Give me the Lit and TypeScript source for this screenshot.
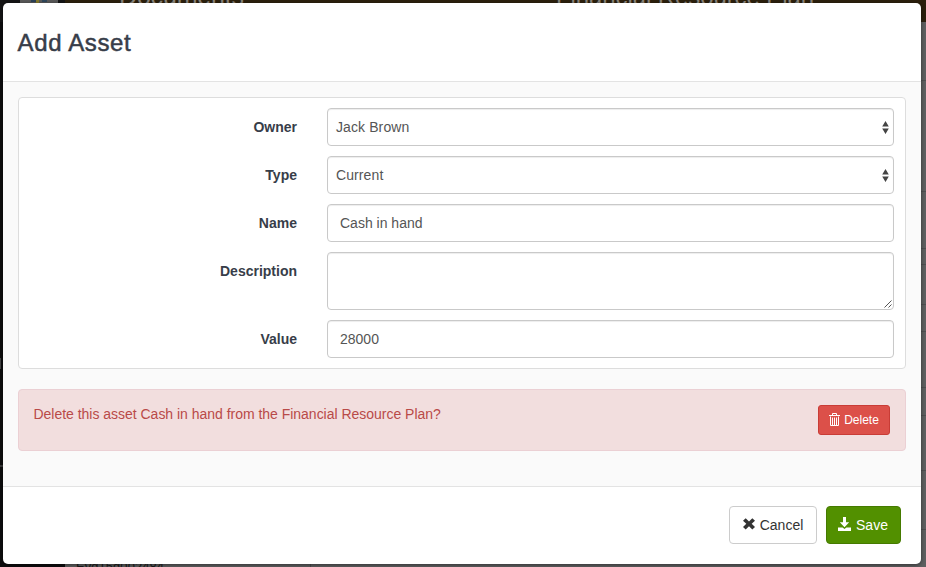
import { LitElement, html, css, svg } from "lit";
import { customElement, property } from "lit/decorators.js";

const LINES = [80, 191, 248, 264, 304, 331, 387, 415, 470, 529];

@customElement("page-backdrop")
class PageBackdrop extends LitElement {
  static styles = css`
    :host { display: block; }
    svg { display: block; }
    text { font-family: "Liberation Sans", Arial, sans-serif; }
  `;
  render() {
    return html`<svg width="926" height="567" viewBox="0 0 926 567">
      <rect width="926" height="567" fill="#5f6061" />
      <rect width="926" height="22" fill="#2c200d" />
      <rect width="65" height="567" fill="#151516" />
      <rect y="22" width="65" height="545" fill="#0d0d0e" />
      <rect x="20" width="38" height="6" fill="#5a5a5a" />
      <rect x="31" width="5" height="2" fill="#2c4258" />
      <rect x="36" width="3" height="3" fill="#857a2c" />
      <rect x="42" width="5" height="2" fill="#30485c" />
      <rect y="465" width="3" height="2" fill="#3a3a3a" />
      <rect y="358" width="1" height="11" fill="#444" />
      <text x="119" y="4.6" font-size="25" textLength="125" fill="#8d877e">Documents</text>
      <text x="556" y="4.6" font-size="24" textLength="258" fill="#8d877e">Financial Resource Plan</text>
      ${LINES.map((y) => svg`<rect x="900" y=${y} width="26" height="1" fill="#4f5051" />`)}
      <rect x="310" y="560" width="1" height="7" fill="#4b4c4d" />
      <text x="76" y="571" font-size="13" textLength="88" fill="#1b1b1b">Evg15g002484</text>
    </svg>`;
  }
}

@customElement("form-row")
class FormRow extends LitElement {
  @property() label = "";
  @property() value = "";
  @property() kind = "text";
  static styles = css`
    :host { display: flex; align-items: flex-start; }
    .label {
      width: 278px; margin-right: 30px; line-height: 38px; text-align: right;
      font-weight: 700; color: #373d49; box-sizing: border-box;
    }
    .control {
      box-sizing: border-box; width: 567px; height: 38px; line-height: 36px; padding: 0 12px;
      display: flex; justify-content: space-between; align-items: center;
      border: 1px solid #c9c9c9; border-radius: 4px; background: #fff; color: #555;
      box-shadow: inset 0 1px 1px rgba(0, 0, 0, 0.075);
    }
    .select { padding: 0 4px 0 8px; letter-spacing: 0.1px; }
    .area { height: 58px; align-items: flex-end; justify-content: flex-end; padding: 0 1px 1px; }
    svg { display: block; }
  `;
  render() {
    const mark =
      this.kind === "select"
        ? html`<svg width="7" height="13" viewBox="0 0 7 13"><path d="M3.5 0 6.8 5.6H.2zM3.5 13 .2 7.4h6.6z" fill="#444" /></svg>`
        : this.kind === "area"
          ? html`<svg width="8" height="8" viewBox="0 0 8 8"><path d="M.5 7.5l7-7M4.5 7.5l3-3" stroke="#555" stroke-width="1" /></svg>`
          : "";
    return html`<div class="label">${this.label}</div>
      <div class="control ${this.kind}"><span>${this.value}</span>${mark}</div>`;
  }
}

@customElement("app-root")
class AppRoot extends LitElement {
  static styles = css`
    :host {
      display: block; position: relative; width: 926px; height: 567px; overflow: hidden;
      font: 14px/20px "Liberation Sans", Arial, sans-serif; color: #373d49;
    }
    .modal {
      position: absolute; left: 3px; top: 3px; width: 918px; height: 561px;
      display: flex; flex-direction: column; box-sizing: border-box;
      border-radius: 5px; background: #fff; overflow: hidden;
    }
    .shade {
      position: absolute; left: 3px; top: 3px; width: 918px; height: 561px; border-radius: 5px;
      box-shadow: 0 1px 4px rgba(0, 0, 0, 0.5);
    }
    .head { height: 78px; border-bottom: 1px solid #e3e3e3; padding-left: 14.5px; }
    .title {
      margin: 0; font-size: 24px; line-height: 79px; font-weight: 400; letter-spacing: 0.65px;
      -webkit-text-stroke: 0.5px #373d49;
    }
    .body { height: 404px; box-sizing: border-box; padding: 15px; background: #fafafa; }
    .panel {
      display: flex; flex-direction: column; gap: 10px; box-sizing: border-box; height: 272px;
      padding: 10px 0 0; border: 1px solid #ddd; border-radius: 4px; background: #fff;
    }
    .alert {
      display: flex; justify-content: space-between; align-items: flex-start; box-sizing: border-box;
      height: 62px; margin-top: 20px; padding: 15px 15px 0 14.5px; color: #b94a48;
      border: 1px solid #ebd0d4; border-radius: 4px; background: #f2dede;
    }
    .question { line-height: 18px; letter-spacing: -0.02px; }
    .foot {
      display: flex; gap: 9px; justify-content: flex-end; flex: 1; padding: 19px 20px 0 0;
      border-top: 1px solid #e3e3e3;
    }
    .btn {
      display: flex; align-items: center; justify-content: center; box-sizing: border-box;
      height: 38px; border: 1px solid #ccc; border-radius: 4px; background: #fff; color: #333;
    }
    .cancel { width: 88px; gap: 5px; }
    .cancel svg { margin-bottom: 2px; }
    .save { width: 75px; gap: 5px; color: #fff; background: #529000; border-color: #457a00; }
    .save svg { margin-bottom: 2px; }
    .save { padding-right: 1px; }
    .delete {
      width: 72px; height: 30px; gap: 4px; font-size: 12px; border-radius: 3px;
      color: #fff; background: #dc5049; border-color: #c93c36;
    }
    .delete svg { margin-bottom: 2px; }
    svg { display: block; }
  `;
  render() {
    return html`<page-backdrop></page-backdrop>
      <div class="shade"></div>
      <section class="modal">
        <header class="head"><h1 class="title">Add Asset</h1></header>
        <div class="body">
          <div class="panel">
            <form-row label="Owner" value="Jack Brown" kind="select"></form-row>
            <form-row label="Type" value="Current" kind="select"></form-row>
            <form-row label="Name" value="Cash in hand"></form-row>
            <form-row label="Description" kind="area"></form-row>
            <form-row label="Value" value="28000"></form-row>
          </div>
          <div class="alert">
            <span class="question">Delete this asset Cash in hand from the Financial Resource Plan?</span>
            <div class="btn delete">
              <svg width="11" height="13" viewBox="0 0 11 13" fill="none" stroke="#fff">
                <path d="M0 2.5H11M3.5 2.3V.5h4v1.8M1.5 3.5V12.5h8V3.5M3.5 4.5V12M5.5 4.5V12M7.5 4.5V12" />
              </svg>
              Delete
            </div>
          </div>
        </div>
        <footer class="foot">
          <div class="btn cancel">
            <svg width="12" height="12" viewBox="0 0 12 12">
              <path d="M0 2.7 2.7.2 6 3.4 9.3.2 12 2.7 8.7 5.8 12 8.9 9.3 11.5 6 8.3 2.7 11.5 0 8.9 3.3 5.8z" fill="#333" />
            </svg>
            Cancel
          </div>
          <div class="btn save">
            <svg width="13" height="14" viewBox="0 0 13 14">
              <path d="M5 0h3v5.2h3.2L6.5 10.2 1.8 5.2H5zM0 10.6h4.6l1.9 1.4 1.9-1.4H13V14H0z" fill="#fff" />
            </svg>
            Save
          </div>
        </footer>
      </section>`;
  }
}
